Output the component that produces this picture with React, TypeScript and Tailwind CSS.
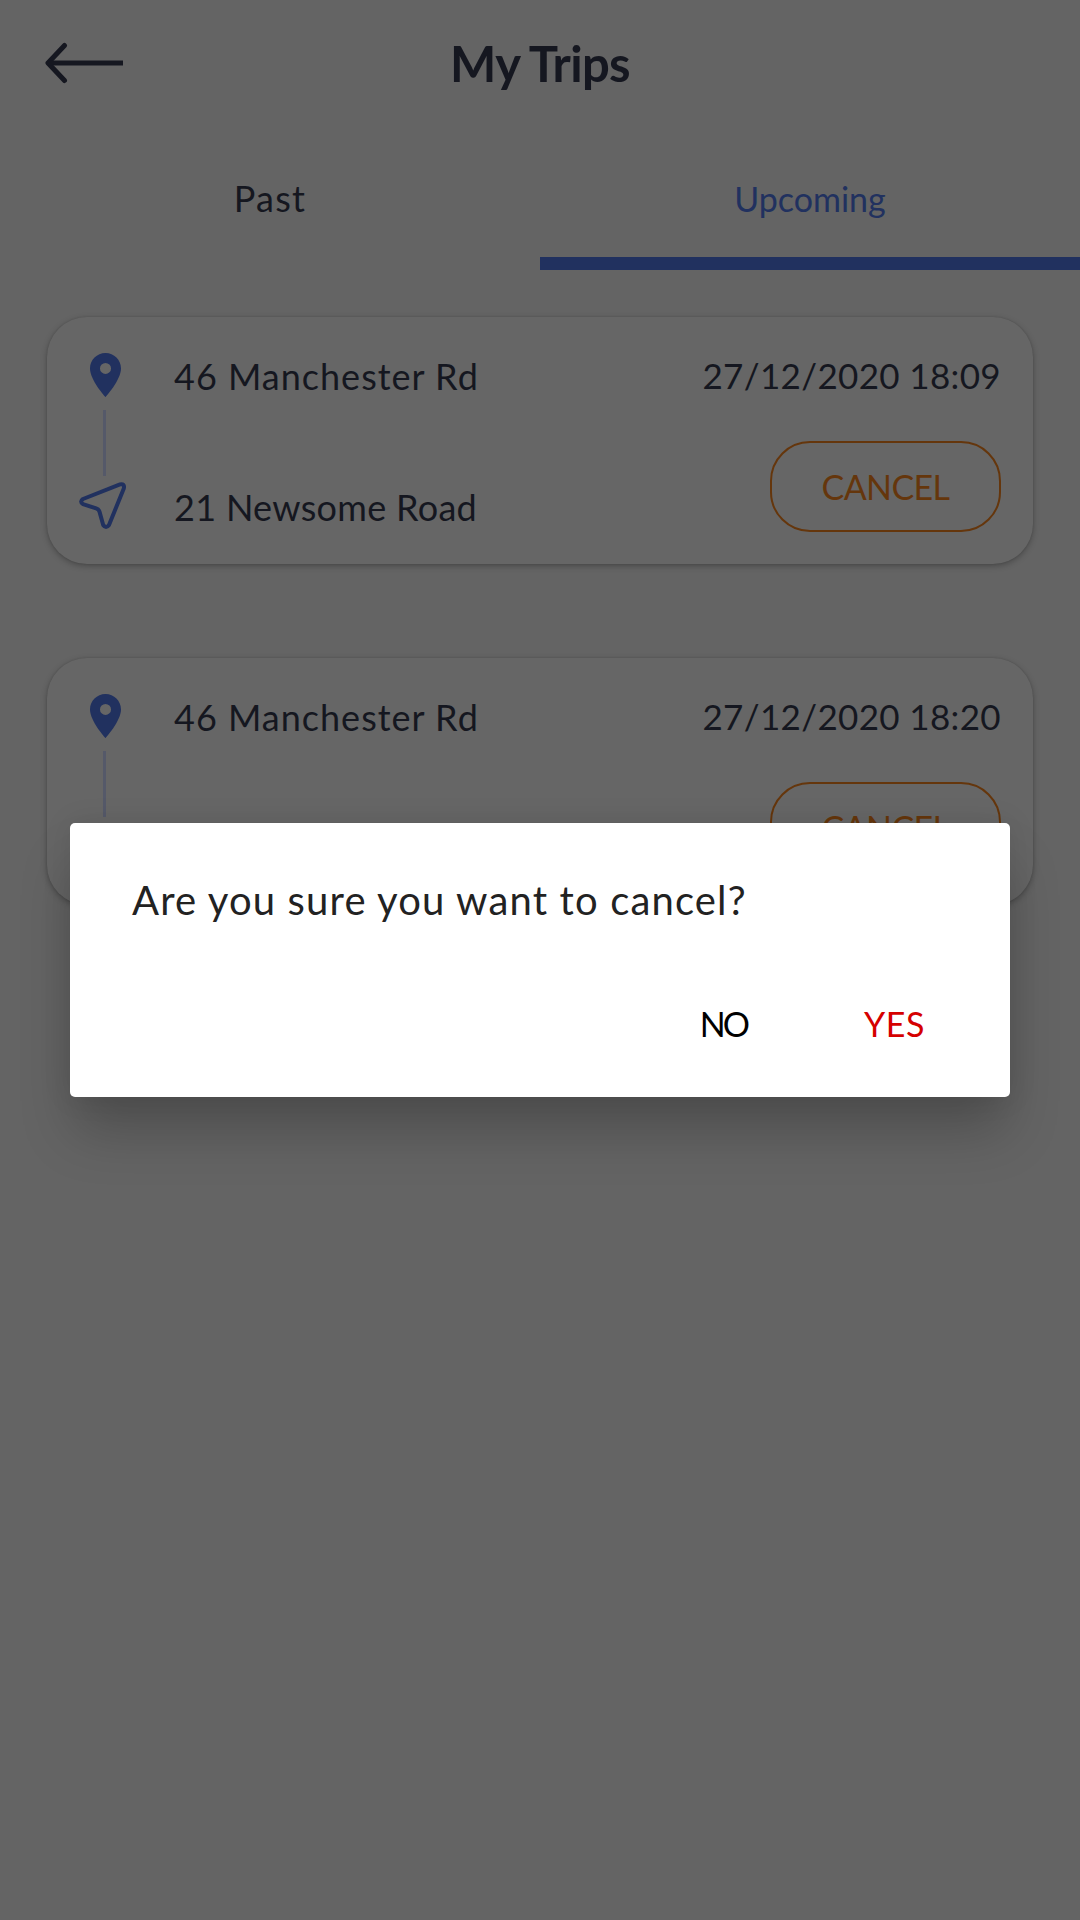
import React from "react";

function BackArrow() {
  return (
    <svg className="h-[44px] w-[80px]" viewBox="0 0 80 44" fill="none" stroke="#151720" strokeWidth="5" strokeLinecap="round" strokeLinejoin="round">
      <path d="M19.5 4.5L3 22L19.5 39.5" />
      <path d="M3 22H78" strokeLinecap="butt" />
    </svg>
  );
}

function Pin() {
  return (
    <svg className="h-[44px] w-[31px]" viewBox="5 2 14 20" preserveAspectRatio="none" fill="#21315f">
      <path d="M12 2C8.13 2 5 5.13 5 9c0 5.25 7 13 7 13s7-7.75 7-13c0-3.87-3.13-7-7-7zm0 9.5a2.5 2.5 0 0 1 0-5 2.5 2.5 0 0 1 0 5z" />
    </svg>
  );
}

function Navigate() {
  return (
    <svg className="h-[48px] w-[48px]" viewBox="0 0 48 48" fill="none" stroke="#21315f" strokeWidth="4" strokeLinejoin="round">
      <path d="M41 2.4L4 17Q0.2 19.6 4 22.2L17.2 26.4Q19.6 27.2 20.4 29.4L24.2 43Q27 47 30 43L44.8 6.4Q46 1.6 41 2.4Z" />
    </svg>
  );
}

function TripCard({ time }: { time: string }) {
  return (
    <article className="flex h-[247px] w-[986px] rounded-[40px] bg-[#666666] shadow-[0_2px_6px_rgba(0,0,0,0.28),0_0_2px_rgba(0,0,0,0.12)]">
      <div className="flex w-[127px] flex-col pt-[36px]">
        <div className="pl-[43px]">
          <Pin />
        </div>
        <div className="mt-[13px] ml-[56px] h-[66px] w-[3px] bg-[#555969]" />
        <div className="mt-[6px] pl-[32px]">
          <Navigate />
        </div>
      </div>
      <div className="flex flex-1 flex-col pt-[35px] text-[36px] leading-[48px] whitespace-nowrap">
        <span className="tracking-[1px]">46 Manchester Rd</span>
        <span className="mt-[83px] tracking-[0.3px]">21 Newsome Road</span>
      </div>
      <div className="flex flex-col items-end pt-[32px] pr-[32px]">
        <span className="text-[35px] leading-[52px] tracking-[0.35px] whitespace-nowrap">{time}</span>
        <button className="mt-[40px] flex h-[91px] w-[231px] items-center justify-center rounded-[40px] border-2 border-[#65360c] text-[34px] tracking-[-0.6px] text-[#65360c]">
          CANCEL
        </button>
      </div>
    </article>
  );
}

export default function App() {
  return (
    <main className="relative h-[1920px] w-[1080px] overflow-hidden bg-[#646464] font-['Lato',sans-serif] text-[#151720]">
      <header className="grid h-[126px] grid-cols-[1fr_auto_1fr] items-center px-[45px]">
        <BackArrow />
        <h1 className="text-[49px] leading-[60px] font-bold tracking-[-0.7px]">My Trips</h1>
      </header>
      <nav className="grid h-[144px] grid-cols-2 text-[34px] leading-[48px]">
        <button className="flex justify-center pt-[48px] text-[36px] tracking-[1.3px]">Past</button>
        <button className="flex justify-center border-b-[13px] border-[#21315f] pt-[49px] text-[#21315f]">Upcoming</button>
      </nav>
      <section className="flex flex-col gap-[94px] pt-[47px] pl-[47px]">
        <TripCard time="27/12/2020 18:09" />
        <TripCard time="27/12/2020 18:20" />
      </section>
      <div role="dialog" className="absolute top-[823px] left-[70px] flex h-[274px] w-[940px] flex-col rounded-[5px] bg-white shadow-[0_38px_54px_-4px_rgba(0,0,0,0.22),0_0_30px_rgba(0,0,0,0.09)]">
        <p className="pt-[51px] pl-[62px] text-[40px] leading-[52px] tracking-[1.15px] text-[#222222]">Are you sure you want to cancel?</p>
        <div className="mt-[74px] flex justify-end pr-[85px] text-[34px] leading-[48px]">
          <button className="mr-[117px] tracking-[-3px] text-black">NO</button>
          <button className="tracking-[0.6px] text-[#d50000]">YES</button>
        </div>
      </div>
    </main>
  );
}
